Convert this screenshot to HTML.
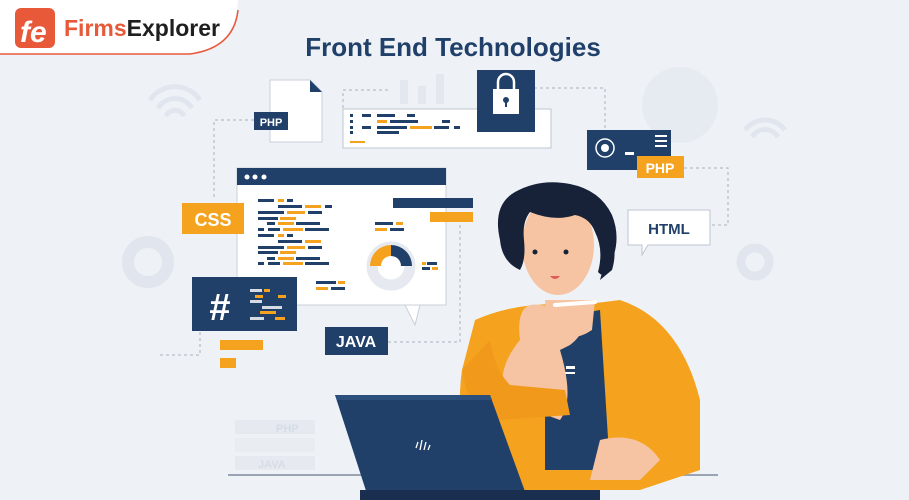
<!DOCTYPE html>
<html><head><meta charset="utf-8"><style>
html,body{margin:0;padding:0;width:909px;height:500px;overflow:hidden;background:#eef2f7;font-family:"Liberation Sans",sans-serif}
svg{display:block}
text{font-family:"Liberation Sans",sans-serif;font-weight:bold}
</style></head><body>
<svg width="909" height="500" viewBox="0 0 909 500">
<rect width="909" height="500" fill="#eef2f7"/>
<g fill="none" stroke="#e1e6ee" stroke-width="5">
<path d="M150 100 a30 30 0 0 1 50 0 M158 108 a20 20 0 0 1 34 0 M166 116 a10 10 0 0 1 18 0"/>
<path d="M745 130 a25 25 0 0 1 40 0 M752 137 a15 15 0 0 1 26 0"/>
<circle cx="148" cy="262" r="20" stroke-width="12"/>
<circle cx="755" cy="262" r="14" stroke-width="9"/>
</g>
<circle cx="680" cy="105" r="38" fill="#e6ebf2"/>
<g fill="#e3e8ef"><rect x="400" y="80" width="8" height="24"/><rect x="418" y="86" width="8" height="18"/><rect x="436" y="74" width="8" height="30"/></g>
<rect x="235" y="420" width="80" height="14" fill="#e6eaf0"/><rect x="235" y="438" width="80" height="14" fill="#e9edf2"/><rect x="235" y="456" width="80" height="14" fill="#e6eaf0"/>
<text x="276" y="432" font-size="11" fill="#d6dce5">PHP</text><text x="258" y="468" font-size="11" fill="#d6dce5">JAVA</text>
<g fill="none" stroke="#aab3c0" stroke-width="1" stroke-dasharray="3 3">
<path d="M254 120 H214 V200"/><path d="M343 120 V90 H390"/><path d="M534 88 H605 V130"/>
<path d="M684 168 H728 V225 H710"/><path d="M388 342 H460 V210"/><path d="M160 355 H200 V330"/>
</g>
<path d="M0 0 H238 Q236 48 190 54 H0 Z" fill="#fff"/>
<path d="M0 54 H190 Q234 48 238 10" fill="none" stroke="#e8593a" stroke-width="1.5"/>
<rect x="15" y="8" width="40" height="40" rx="6" fill="#e8593a"/>
<text x="20" y="42" font-size="30" fill="#fff" font-style="italic">fe</text>
<text x="64" y="36" font-size="23"><tspan fill="#e8593a">Firms</tspan><tspan fill="#1f1f1f">Explorer</tspan></text>
<text x="453" y="56" font-size="26" fill="#20406a" text-anchor="middle">Front End Technologies</text>
<path d="M270 80 H310 L322 92 V142 H270 Z" fill="#fff" stroke="#c9d0da"/>
<path d="M310 80 L322 92 H310Z" fill="#20406a"/>
<rect x="254" y="112" width="34" height="18" fill="#20406a"/><text x="271" y="126" font-size="11" fill="#fff" text-anchor="middle">PHP</text>
<rect x="343" y="109" width="208" height="39" fill="#fff" stroke="#bfc7d2"/>
<g fill="#20406a"><rect x="350" y="114" width="3" height="3"/><rect x="350" y="120" width="3" height="3"/><rect x="350" y="126" width="3" height="3"/><rect x="350" y="131" width="3" height="3"/>
<rect x="362" y="114" width="9" height="3"/><rect x="377" y="114" width="18" height="3"/><rect x="407" y="114" width="8" height="3"/>
<rect x="390" y="120" width="28" height="3"/><rect x="442" y="120" width="8" height="3"/><rect x="362" y="126" width="9" height="3"/><rect x="377" y="126" width="30" height="3"/><rect x="434" y="126" width="15" height="3"/><rect x="454" y="126" width="6" height="3"/><rect x="377" y="131" width="22" height="3"/></g>
<g fill="#f5a31e"><rect x="377" y="120" width="10" height="3"/><rect x="410" y="126" width="22" height="3"/><rect x="350" y="141" width="15" height="2"/></g>
<rect x="477" y="70" width="58" height="62" fill="#20406a"/>
<rect x="493" y="89" width="26" height="25" fill="#fff"/><path d="M498 89 V82 a8 8 0 0 1 16 0 V89" fill="none" stroke="#fff" stroke-width="2.5"/>
<circle cx="506" cy="100" r="3" fill="#20406a"/><rect x="505" y="101" width="2" height="6" fill="#20406a"/>
<rect x="587" y="130" width="84" height="40" fill="#20406a"/>
<circle cx="605" cy="148" r="9" fill="none" stroke="#fff" stroke-width="1.5"/><circle cx="605" cy="148" r="4" fill="#fff"/>
<g fill="#fff"><rect x="655" y="135" width="12" height="2"/><rect x="655" y="140" width="12" height="2"/><rect x="655" y="145" width="12" height="2"/><rect x="625" y="152" width="9" height="3"/></g>
<rect x="637" y="156" width="47" height="22" fill="#f5a31e"/><text x="660" y="173" font-size="14" fill="#fff" text-anchor="middle">PHP</text>
<rect x="237" y="168" width="209" height="137" fill="#fff" stroke="#c9d0da"/>
<path d="M405 305 L415 325 L420 305Z" fill="#fff" stroke="#c9d0da"/>
<rect x="237" y="168" width="209" height="17" fill="#20406a"/>
<g fill="#fff"><circle cx="247" cy="177" r="2.5"/><circle cx="255" cy="177" r="2.5"/><circle cx="264" cy="177" r="2.5"/></g>
<g fill="#20406a">
<rect x="258" y="199" width="16" height="3"/><rect x="287" y="199" width="6" height="3"/><rect x="278" y="205" width="24" height="3"/><rect x="325" y="205" width="7" height="3"/>
<rect x="258" y="211" width="26" height="3"/><rect x="308" y="211" width="14" height="3"/><rect x="258" y="217" width="20" height="3"/>
<rect x="267" y="222" width="8" height="3"/><rect x="296" y="222" width="24" height="3"/><rect x="258" y="228" width="6" height="3"/><rect x="268" y="228" width="12" height="3"/><rect x="305" y="228" width="24" height="3"/>
<rect x="258" y="234" width="16" height="3"/><rect x="287" y="234" width="6" height="3"/><rect x="278" y="240" width="24" height="3"/><rect x="258" y="246" width="26" height="3"/><rect x="308" y="246" width="14" height="3"/>
<rect x="258" y="251" width="20" height="3"/><rect x="267" y="257" width="8" height="3"/><rect x="296" y="257" width="24" height="3"/><rect x="258" y="262" width="6" height="3"/><rect x="268" y="262" width="12" height="3"/><rect x="305" y="262" width="24" height="3"/>
<rect x="393" y="198" width="80" height="10"/><rect x="375" y="222" width="18" height="3"/><rect x="390" y="228" width="14" height="3"/>
<rect x="316" y="281" width="20" height="3"/><rect x="331" y="287" width="14" height="3"/><rect x="427" y="262" width="10" height="3"/><rect x="422" y="267" width="8" height="3"/>
</g>
<g fill="#f5a31e">
<rect x="278" y="199" width="6" height="3"/><rect x="305" y="205" width="16" height="3"/><rect x="287" y="211" width="18" height="3"/><rect x="280" y="217" width="16" height="3"/>
<rect x="278" y="222" width="16" height="3"/><rect x="283" y="228" width="20" height="3"/><rect x="278" y="234" width="6" height="3"/><rect x="305" y="240" width="16" height="3"/><rect x="287" y="246" width="18" height="3"/><rect x="280" y="251" width="16" height="3"/><rect x="278" y="257" width="16" height="3"/><rect x="283" y="262" width="20" height="3"/>
<rect x="430" y="212" width="43" height="10"/><rect x="396" y="222" width="7" height="3"/><rect x="375" y="228" width="12" height="3"/><rect x="338" y="281" width="7" height="3"/><rect x="316" y="287" width="12" height="3"/><rect x="422" y="262" width="4" height="3"/><rect x="432" y="267" width="6" height="3"/>
</g>
<circle cx="391" cy="266" r="19" fill="none" stroke="#e6eaf0" stroke-width="11"/>
<path d="M370 266 A21 21 0 0 1 391 245 V256 A10 10 0 0 0 381 266 Z" fill="#f5a31e"/>
<path d="M391 245 A21 21 0 0 1 412 266 H401 A10 10 0 0 0 391 256 Z" fill="#20406a"/>
<rect x="182" y="203" width="62" height="31" fill="#f5a31e"/><text x="213" y="226" font-size="18" fill="#fff" text-anchor="middle">CSS</text>
<rect x="192" y="277" width="105" height="54" fill="#20406a"/><text x="220" y="320" font-size="38" fill="#fff" text-anchor="middle">#</text>
<g fill="#d5dbe4"><rect x="250" y="289" width="12" height="3"/><rect x="250" y="300" width="12" height="3"/><rect x="262" y="306" width="20" height="3"/><rect x="250" y="317" width="14" height="3"/></g>
<g fill="#f5a31e"><rect x="264" y="289" width="6" height="3"/><rect x="255" y="295" width="8" height="3"/><rect x="278" y="295" width="8" height="3"/><rect x="260" y="311" width="16" height="3"/><rect x="275" y="317" width="10" height="3"/></g>
<rect x="325" y="327" width="63" height="28" fill="#20406a"/><text x="356" y="347" font-size="16" fill="#fff" text-anchor="middle">JAVA</text>
<path d="M628 210 H710 V245 H648 L642 255 L642 245 H628 Z" fill="#fff" stroke="#bcc5d0"/><text x="669" y="234" font-size="15" fill="#20406a" text-anchor="middle">HTML</text>
<rect x="220" y="340" width="43" height="10" fill="#f5a31e"/><rect x="220" y="358" width="16" height="10" fill="#f5a31e"/>
<rect x="228" y="474" width="490" height="2" fill="#9aa4b2"/>
<!-- person -->
<path d="M475 320 Q520 300 580 305 L620 300 Q680 320 700 400 L700 470 L640 490 L520 490 L470 470 Q455 420 462 370 Z" fill="#f5a31e"/>
<path d="M545 320 L600 310 L610 470 L545 470 Z" fill="#20406a"/>
<g fill="#fff"><rect x="557" y="366" width="7" height="3"/><rect x="566" y="366" width="9" height="3"/><rect x="557" y="372" width="18" height="2"/></g>
<path d="M545 300 L595 300 L592 330 Q570 345 548 330 Z" fill="#f6c4a2"/>
<ellipse cx="558" cy="245" rx="36" ry="50" fill="#f6c4a2"/>
<path d="M500 240 Q492 205 515 192 Q540 178 570 184 Q600 190 612 215 Q622 240 610 265 Q605 280 598 272 Q604 250 595 232 Q590 218 575 215 Q555 222 530 212 Q522 222 524 240 Q526 260 520 270 Q502 262 500 240Z" fill="#172238"/>
<path d="M595 225 Q608 255 600 280 L612 270 Q618 250 610 232Z" fill="#172238"/>
<circle cx="535" cy="252" r="2.5" fill="#172238"/><circle cx="566" cy="252" r="2.5" fill="#172238"/>
<path d="M550 276 Q555 282 560 276" fill="#e25b5b"/>
<path d="M520 340 Q515 300 540 305 L580 310 Q590 330 570 345 L560 350 Q575 400 560 420 L505 400 Q495 370 520 340Z" fill="#f6c4a2"/>
<path d="M555 305 L595 302" stroke="#fff" stroke-width="4" stroke-linecap="round"/>
<path d="M462 370 Q470 420 500 420 L570 415 L565 390 L510 385 Q495 370 490 340 Z" fill="#f0991a"/>
<path d="M335 395 H490 L527 497 H368 Z" fill="#20406a"/>
<path d="M335 395 H490 L492 400 H337 Z" fill="#2d4f7c"/>
<rect x="360" y="490" width="240" height="10" fill="#1a2f50"/>
<g stroke="#fff" stroke-width="1.3"><path d="M416 448 l2 -6 M420 450 l2 -10 M424 450 l2 -8 M428 450 l2 -5"/></g>
<path d="M600 440 Q640 430 660 460 L640 480 L590 480 Z" fill="#f6c4a2"/>
</svg>
</body></html>
